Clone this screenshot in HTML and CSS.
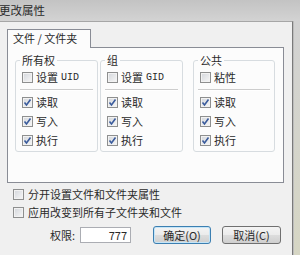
FILE: index.html
```html
<!DOCTYPE html>
<html>
<head>
    <meta charset="UTF-8">
    <meta name="viewport" content="width=device-width, initial-scale=1.0">
    <title>更改属性</title>
    <link rel="stylesheet" href="styles.css">
</head>
<body>
    <div class="titlebar">更改属性</div>
    <div class="window">
        <div class="dialog">
            <div class="tab">文件 / 文件夹</div>
            <div class="panel">
                <fieldset class="group g1">
                    <legend>所有权</legend>
                    <div class="row first"><span class="box"></span>设置 <span class="latin">UID</span></div>
                    <div class="sep"></div>
                    <div class="row"><span class="box on"><svg viewBox="0 0 9 9"><path d="M1.5 4.5 L3.5 7 L7.5 1.5"/></svg></span>读取</div>
                    <div class="row"><span class="box on"><svg viewBox="0 0 9 9"><path d="M1.5 4.5 L3.5 7 L7.5 1.5"/></svg></span>写入</div>
                    <div class="row"><span class="box on"><svg viewBox="0 0 9 9"><path d="M1.5 4.5 L3.5 7 L7.5 1.5"/></svg></span>执行</div>
                </fieldset>
                <fieldset class="group g2">
                    <legend>组</legend>
                    <div class="row first"><span class="box"></span>设置 <span class="latin">GID</span></div>
                    <div class="sep"></div>
                    <div class="row"><span class="box on"><svg viewBox="0 0 9 9"><path d="M1.5 4.5 L3.5 7 L7.5 1.5"/></svg></span>读取</div>
                    <div class="row"><span class="box on"><svg viewBox="0 0 9 9"><path d="M1.5 4.5 L3.5 7 L7.5 1.5"/></svg></span>写入</div>
                    <div class="row"><span class="box on"><svg viewBox="0 0 9 9"><path d="M1.5 4.5 L3.5 7 L7.5 1.5"/></svg></span>执行</div>
                </fieldset>
                <fieldset class="group g3">
                    <legend>公共</legend>
                    <div class="row first"><span class="box"></span>粘性</div>
                    <div class="sep"></div>
                    <div class="row"><span class="box on"><svg viewBox="0 0 9 9"><path d="M1.5 4.5 L3.5 7 L7.5 1.5"/></svg></span>读取</div>
                    <div class="row"><span class="box on"><svg viewBox="0 0 9 9"><path d="M1.5 4.5 L3.5 7 L7.5 1.5"/></svg></span>写入</div>
                    <div class="row"><span class="box on"><svg viewBox="0 0 9 9"><path d="M1.5 4.5 L3.5 7 L7.5 1.5"/></svg></span>执行</div>
                </fieldset>
            </div>
            <div class="opt"><span class="box"></span>分开设置文件和文件夹属性</div>
            <div class="opt"><span class="box"></span>应用改变到所有子文件夹和文件</div>
            <div class="perm">
                <span class="permLabel">权限:</span>
                <div class="field">777</div>
                <button class="btn ok">确定(O)</button>
                <button class="btn cancel">取消(C)</button>
            </div>
        </div>
        <div class="edge"></div>
    </div>
</body>
</html>
```

FILE: styles.css
```css
*{ margin: 0; padding: 0; box-sizing: border-box; }
body{ width: 300px; height: 255px; overflow: hidden; font: 11px/13px "Noto Sans CJK SC", sans-serif; color: #2a2a2a; background: #f0f0f0; }

.titlebar{ height: 21px; padding-top: 3px; text-indent: -1px; line-height: 14px; font-size: 11.5px; background: linear-gradient(#c3c3c3, #d3d3d3); }

.window{ display: flex; height: 234px; }
.dialog{ width: 293px; padding: 7px 8px 0 7px; border-top: 1px solid #a6a6a6; border-right: 1px solid #7a7a7a; background: #f0f0f0; }
.edge{ flex: 1; background: linear-gradient(#d2d2d2, #d6d6c4); border-left: 1px solid #bcbcbc; }

.tab{ position: relative; z-index: 1; width: 84px; height: 19px; margin-bottom: -1px; padding-left: 5px; line-height: 17px; border: 1px solid #898c95; border-bottom: none; background: #fcfcfc; }
.panel{ display: flex; height: 136px; padding: 6px 7px 0; border: 1px solid #898c95; background: #fcfcfc; }

.group{ height: 98px; padding: 0 0 0 6px; border: 1px solid #d7dce0; border-radius: 3px; }
.group legend{ padding: 0 2px; margin-left: -2px; line-height: 13px; }
.g1{ width: 83px; }
.g2{ width: 83px; margin-left: 2px; }
.g3{ width: 82px; margin-left: 10px; }

.row{ display: flex; align-items: center; height: 19px; }
.row.first{ margin-top: 1px; }
.latin{ font: 10px/13px "Liberation Mono", monospace; margin-left: 3px; }
.sep{ height: 2px; margin: 2px 4px 2px -2px; border-top: 1px solid #cdcdcd; border-bottom: 1px solid #ffffff; }

.box{ display: inline-block; flex: none; width: 11px; height: 11px; margin-right: 3px; border: 1px solid #8e8f8f; background: linear-gradient(135deg, #d3d6db, #f7f7f7); box-shadow: inset 0 0 0 1px #f2f2f2; }
.box svg{ display: block; width: 9px; height: 9px; }
.box path{ fill: none; stroke: #3a5b9c; stroke-width: 1.6; }

.opt{ display: flex; align-items: center; height: 18px; margin-left: 6px; }
.dialog .panel + .opt{ margin-top: 2px; }
.opt .box{ margin-right: 4px; }

.perm{ display: flex; align-items: center; height: 18px; margin-top: 5px; }
.permLabel{ width: 27px; margin-left: 43px; }
.field{ width: 51px; height: 16px; margin-left: 3px; padding-right: 3px; line-height: 14px; text-align: right; border: 1px solid #abadb3; background: #ffffff; }
.btn{ height: 18px; font: inherit; line-height: 14px; color: #2a2a2a; border: 1px solid #707070; border-radius: 3px; background: linear-gradient(#f4f4f4 0%, #ebebeb 50%, #dddddd 50%, #cfcfcf 100%); }
.ok{ width: 58px; margin-left: 22px; border-color: #3c7fb1; box-shadow: inset 0 0 0 1px #c4e5f8; }
.cancel{ width: 59px; margin-left: 11px; }
```
